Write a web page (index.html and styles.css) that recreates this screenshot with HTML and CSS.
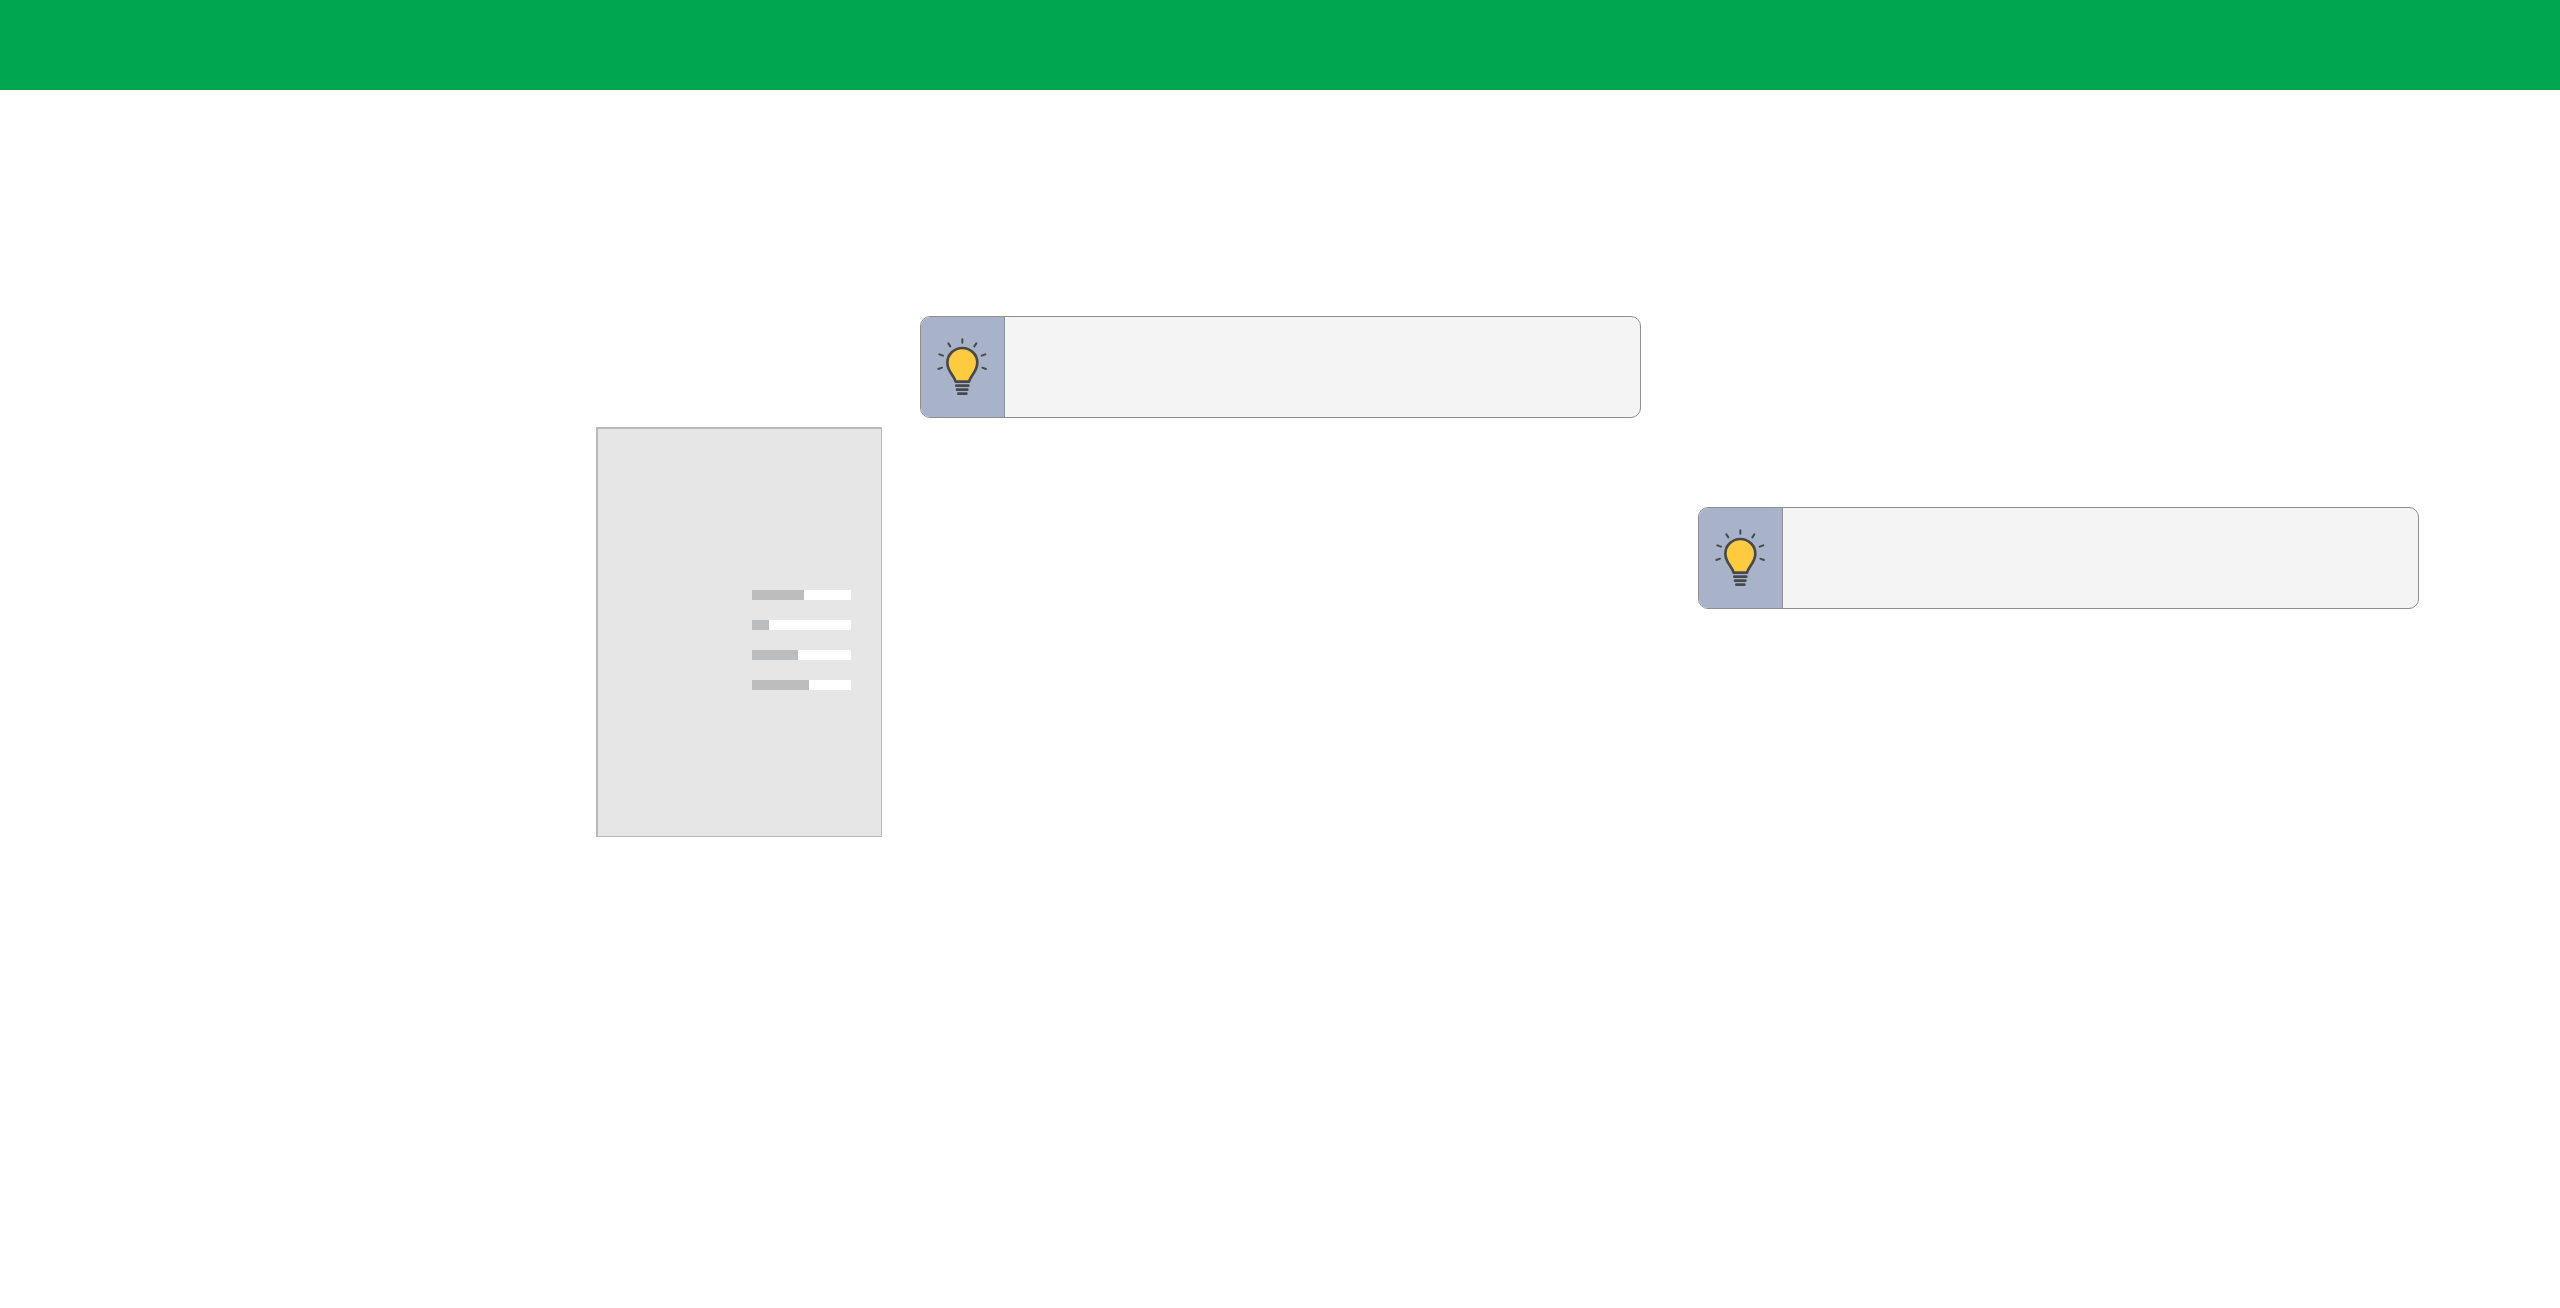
FILE: index.html
```
<!DOCTYPE html>
<html lang="en">
<head>
<meta charset="UTF-8">
<meta name="viewport" content="width=device-width, initial-scale=1.0">
<title>Guide</title>
<link rel="stylesheet" href="styles.css">
</head>
<body>

<!-- Shared bulb icon -->
<svg class="symbols" aria-hidden="true">
  <symbol id="bulb" viewBox="111 116 153 174">
    <g fill="none" stroke="#47494c" stroke-width="6" stroke-linecap="round" stroke-linejoin="round">
      <path d="M187 120V130M145 132L151 141M229 132L223 141M118 165L129 169M256 165L245 169M115 209L126 205M258 209L247 205"/>
      <path fill="#fecb3e" stroke-width="8" d="M167 247C163 230 142 216 142 190A45 44 0 0 1 232 190C232 216 211 230 207 247Z"/>
      <path stroke-width="8" d="M169 259H205M171 271H202M175 283H199"/>
    </g>
  </symbol>
</svg>

<header class="header"></header>

<main class="content">
  <section class="panel">
    <div class="bar"><div class="bar-fill" style="width: 53%"></div></div>
    <div class="bar"><div class="bar-fill" style="width: 17%"></div></div>
    <div class="bar"><div class="bar-fill" style="width: 46%"></div></div>
    <div class="bar"><div class="bar-fill" style="width: 58%"></div></div>
  </section>

  <aside class="tip tip-first">
    <div class="tip-icon"><svg><use href="#bulb"/></svg></div>
  </aside>

  <aside class="tip tip-second">
    <div class="tip-icon"><svg><use href="#bulb"/></svg></div>
  </aside>
</main>

</body>
</html>
```
FILE: styles.css
```
* {
  box-sizing: border-box;
}

body {
  margin: 0;
  background-color: #fff;
  font-family: "Open Sans", sans-serif;
}

.symbols {
  display: none;
}

.header {
  height: 90px;
  background-color: #00a650;
}

/* margin, panel, gap, tip, gap, tip, margin */
.content {
  display: grid;
  grid-template-columns: 596fr 286fr 38fr 721fr 57fr 721fr 141fr;
  align-items: start;
  padding: 226px 0 80px;
}

.panel {
  grid-column: 2;
  display: flex;
  flex-direction: column;
  align-items: flex-end;
  gap: 20px;
  margin-top: 111px;
  padding: 161px 30px 146px;
  background-color: #e6e6e6;
  border: 1px solid #b9b9b9;
  border-top-width: 2px;
  border-left-width: 2px;
}

.bar {
  width: 39%;
  min-width: 99px;
  height: 10px;
  background-color: #fff;
}

.bar-fill {
  height: 100%;
  background-color: #bcbdbf;
}

.tip {
  display: flex;
  height: 102px;
  overflow: hidden;
  background-color: #f4f4f4;
  border: 1px solid #8e8e8e;
  border-radius: 10px;
}

.tip-first {
  grid-column: 4;
}

.tip-second {
  grid-column: 6;
  margin-top: 191px;
}

.tip-icon {
  display: flex;
  align-items: center;
  justify-content: center;
  width: 84px;
  background-color: #a8b3c9;
  border-right: 1px solid #8c929c;
}

.tip-icon svg {
  width: 51px;
  height: 58px;
}
```
